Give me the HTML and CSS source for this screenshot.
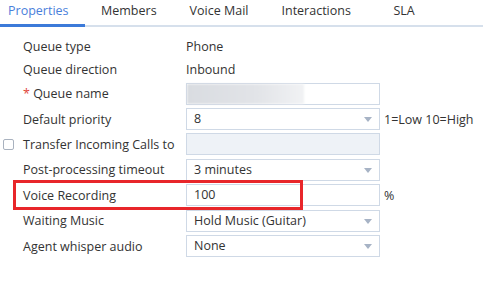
FILE: index.html
```html
<!DOCTYPE html>
<html lang="en">
<head>
  <meta charset="UTF-8" />
  <title>Queue properties</title>
  <link rel="stylesheet" href="styles.css">
</head>
<body>
  <nav class="tabs">
    <div class="tab active">Properties</div>
    <div class="tab">Members</div>
    <div class="tab">Voice Mail</div>
    <div class="tab">Interactions</div>
    <div class="tab sla">SLA</div>
  </nav>

  <div class="form">
    <div class="row text-row">
      <div class="check"></div>
      <div class="label">Queue type</div>
      <div class="value">Phone</div>
    </div>
    <div class="row text-row">
      <div class="check"></div>
      <div class="label">Queue direction</div>
      <div class="value">Inbound</div>
    </div>
    <div class="row">
      <div class="check"></div>
      <div class="label"><span class="req">*</span> Queue name</div>
      <div class="field"><div class="blurred"></div></div>
    </div>
    <div class="row">
      <div class="check"></div>
      <div class="label">Default priority</div>
      <div class="field select">8</div>
      <div class="suffix">1=Low 10=High</div>
    </div>
    <div class="row">
      <div class="check"><span class="box"></span></div>
      <div class="label">Transfer Incoming Calls to</div>
      <div class="field disabled"></div>
    </div>
    <div class="row">
      <div class="check"></div>
      <div class="label">Post-processing timeout</div>
      <div class="field select">3 minutes</div>
    </div>
    <div class="row highlighted">
      <div class="check"></div>
      <div class="label">Voice Recording</div>
      <div class="field">100</div>
      <div class="suffix">%</div>
      <div class="mark"></div>
    </div>
    <div class="row">
      <div class="check"></div>
      <div class="label">Waiting Music</div>
      <div class="field select">Hold Music (Guitar)</div>
    </div>
    <div class="row">
      <div class="check"></div>
      <div class="label">Agent whisper audio</div>
      <div class="field select">None</div>
    </div>
  </div>
</body>
</html>
```

FILE: styles.css
```css
* {
  box-sizing: border-box;
}

body {
  margin: 0;
  background: #fff;
  color: #333;
  font-family: 'Open Sans', 'Liberation Sans', sans-serif;
  font-size: 12.5px;
}

.tabs {
  display: flex;
  height: 27px;
  border-bottom: 2px solid #d6e0ec;
}

.tab {
  padding: 1px 16.5px 0;
  line-height: 20px;
  color: #333;
}

.tab:first-child {
  padding-left: 8px;
  padding-right: 16px;
}

.tab.active {
  color: #4a80db;
  border-bottom: 3px solid #3c7ad9;
  margin-bottom: -2px;
}

.tab.sla {
  padding-left: 26px;
}

.form {
  padding-top: 8px;
}

.row {
  display: flex;
  align-items: center;
  height: 25.4px;
  position: relative;
}

.row.text-row {
  height: 23px;
}

.check {
  width: 23px;
  display: flex;
  align-items: center;
  padding-left: 3px;
}

.box {
  width: 11px;
  height: 11px;
  border: 1px solid #a9b2bf;
  border-radius: 2px;
}

.label {
  width: 163px;
  white-space: nowrap;
}

.req {
  color: #e0443a;
}

.field {
  width: 194px;
  height: 22px;
  border: 1px solid #cfd9e6;
  padding: 0 7px;
  line-height: 20px;
  position: relative;
}

.field.disabled {
  background: #eef2f7;
}

.field.select::after {
  content: '';
  position: absolute;
  right: 7px;
  top: 8px;
  border-left: 4px solid transparent;
  border-right: 4px solid transparent;
  border-top: 5px solid #a7b3c5;
}

.blurred {
  position: absolute;
  left: 0;
  top: 0;
  width: 117px;
  height: 20px;
  background: linear-gradient(to right, #d9dce1, #e2e4e8 60%, #f1f2f4);
  filter: blur(1px);
}

.suffix {
  padding-left: 4px;
}

.mark {
  position: absolute;
  left: 13px;
  top: -3px;
  width: 290px;
  height: 30px;
  border: 3px solid #e8262a;
}
```
